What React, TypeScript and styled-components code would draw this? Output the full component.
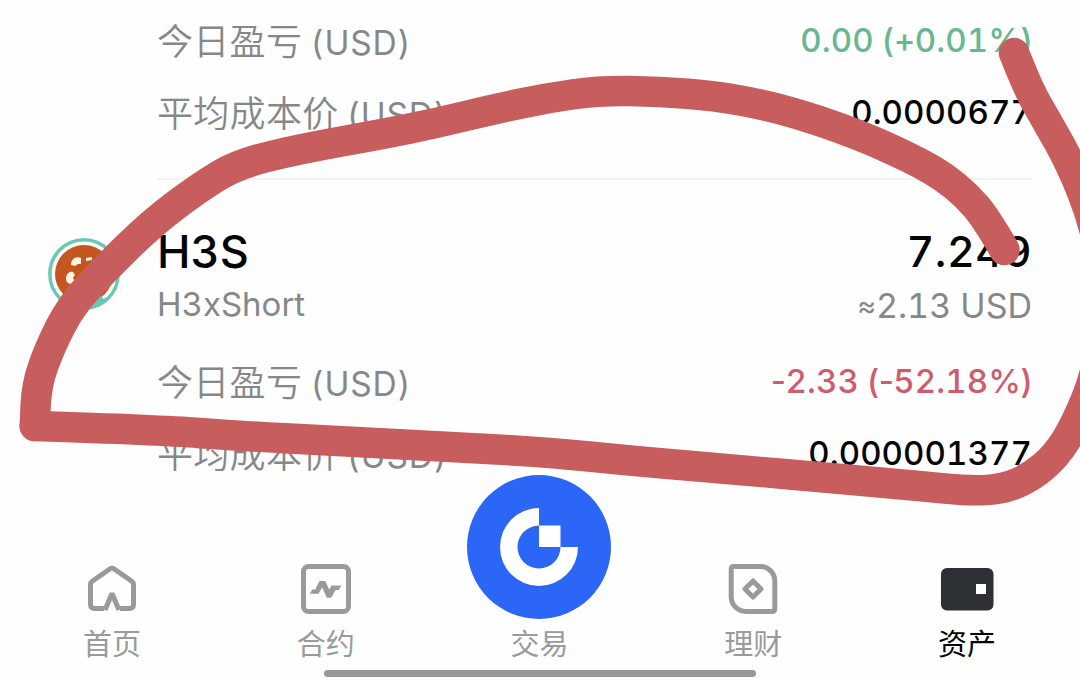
import React from "react";
import styled, { createGlobalStyle } from "styled-components";

type Tone = "up" | "down" | "plain";
type Point = [number, number];

interface StatProps {
  label: string;
  value: string;
  tone: Tone;
}

interface TabProps {
  label: string;
  active?: boolean;
  children: React.ReactNode;
}

const tones = {
  up: "#67b891",
  down: "#cf5c6c",
  plain: "#050505",
};

// digits stay tabular, signs and brackets keep their natural width
const splitValue = (value: string) => value.split(/([0-9.]+)/).filter(Boolean);

const Stat = ({ label, value, tone }: StatProps) => (
  <S.Stat>
    <S.Label>
      {label} <S.Unit>(USD)</S.Unit>
    </S.Label>
    <S.Value $tone={tone}>
      {splitValue(value).map((part, i) =>
        /\d/.test(part) ? part : <S.Sign key={i}>{part}</S.Sign>
      )}
    </S.Value>
  </S.Stat>
);

const Tab = ({ label, active, children }: TabProps) => (
  <S.Tab $active={active}>
    <S.TabIcon>{children}</S.TabIcon>
    <S.TabLabel>{label}</S.TabLabel>
  </S.Tab>
);

const CoinIcon = () => (
  <svg width="72" height="72" viewBox="0 0 72 72">
    <circle cx="36" cy="36" r="34.2" fill="#fffdf5" stroke="#69c9b3" strokeWidth="3.4" />
    <circle cx="36" cy="36" r="29" fill="#c4561f" />
    <path
      d="M23 27C23 20 29 18 33 20L33 26L30 26L27 28ZM38 20L44 19L44 22L38 23ZM18 41C18 35 22 33 25 34L27 37L25 40L27 43L22 46C19 45 18 43 18 41Z"
      fill="#fff3df"
    />
    <path d="M52 54L55 61L63 58C57 66 48 71 38 71L39 68Z" fill="#62c9b8" />
  </svg>
);

const HomeIcon = () => (
  <svg width="54" height="54" viewBox="0 0 54 54" fill="none" stroke="currentColor" strokeWidth="5">
    <path d="M19 46.6H9.5Q5.5 46.6 5.5 42.6V22.5Q5.5 20.5 7.2 19.2L24.8 7Q27 5.4 29.2 7L46.8 19.2Q48.5 20.5 48.5 22.5V42.6Q48.5 46.6 44.5 46.6H35" />
    <path d="M20 48L27 31.5L34 48" strokeLinejoin="bevel" />
  </svg>
);

const FuturesIcon = () => (
  <svg width="54" height="54" viewBox="0 0 54 54" fill="none" stroke="currentColor">
    <rect x="4.5" y="4.5" width="45" height="45" rx="5" strokeWidth="5" />
    <path
      d="M13.4 27.5H16.2L20.5 19H26.2L30.2 27.6L32.6 23.6H42.5L39.6 28H36.6L32.2 35.8H27.8L23.2 25.4L19.5 31.8H10.8Z"
      fill="currentColor"
      stroke="none"
    />
  </svg>
);

const TradeIcon = () => (
  <svg width="78" height="78" viewBox="0 0 78 78">
    <path d="M39 0A39 39 0 1 0 78 39H60.5A21.5 21.5 0 1 1 39 17.5Z" fill="#fff" />
    <rect x="39" y="17.5" width="21.5" height="21.5" fill="#fff" />
  </svg>
);

const EarnIcon = () => (
  <svg width="54" height="54" viewBox="0 0 54 54" fill="none" stroke="currentColor">
    <path
      d="M7.5 4.5H34A14.5 14.5 0 0 1 48.8 19V46.5Q48.8 49.5 45.8 49.5H20A14.7 14.7 0 0 1 5.2 35V7.5Q5.2 4.5 7.5 4.5Z"
      strokeWidth="5"
    />
    <path d="M27 19L35 27L27 35L19 27Z" strokeWidth="5" strokeLinejoin="round" />
  </svg>
);

const AssetsIcon = () => (
  <svg width="54" height="54" viewBox="0 0 54 54">
    <rect x="1" y="6" width="52.5" height="42.5" rx="6" fill="#2d3034" />
    <rect x="36" y="22" width="10" height="10" fill="#fff" />
  </svg>
);

const upperStroke: Point[] = [
  [1004.5, 250],
  [986, 218],
  [966, 195],
  [944, 177],
  [920, 163],
  [895, 151],
  [873, 141],
  [840, 128],
  [800, 114.5],
  [760, 104],
  [715, 96],
  [660, 91.5],
  [600, 90.5],
  [547, 98],
  [490, 110],
  [435, 123.5],
  [380, 134.6],
  [300, 149],
  [238, 164],
  [200, 187],
  [152, 223],
  [103, 271],
  [71, 306],
  [50, 347],
  [36.5, 385],
  [34.8, 426],
];

const lowerStroke: Point[] = [
  [34.8, 426],
  [160, 430],
  [240, 436],
  [330, 440.5],
  [440, 446.5],
  [545, 452],
  [633, 461],
  [740, 470],
  [840, 479],
  [920, 486],
  [970, 491],
  [1004, 489],
  [1031, 477],
  [1056, 456],
  [1076, 424],
  [1097, 372],
  [1108, 295],
  [1094, 222],
  [1070.5, 163],
  [1045, 118],
  [1030, 92],
  [1014, 53],
];

// quadratic curves that run from midpoint to midpoint
const smooth = (points: Point[]) => {
  const last = points[points.length - 1];
  const curves = points.slice(1, -1).map((p, i) => {
    const next = points[i + 2];
    return `Q${p} ${(p[0] + next[0]) / 2},${(p[1] + next[1]) / 2}`;
  });
  return `M${points[0]}${curves.join("")}L${last}`;
};

// freehand marker drawn over the asset list
const Marker = () => (
  <S.Marker viewBox="0 0 1080 680">
    <path d={smooth(upperStroke)} />
    <path d={smooth(lowerStroke)} />
  </S.Marker>
);

const App = () => (
  <>
    <GlobalStyle />
    <S.Screen>
      <S.Assets>
        <Stat label="今日盈亏" value="0.00 (+0.01%)" tone="up" />
        <Stat label="平均成本价" value="0.0000677" tone="plain" />
        <S.Divider />
        <S.Coin>
          <S.CoinLogo>
            <CoinIcon />
          </S.CoinLogo>
          <S.CoinText>
            <S.Symbol>H3S</S.Symbol>
            <S.CoinName>H3xShort</S.CoinName>
          </S.CoinText>
          <S.Holding>
            <S.Amount>7.249</S.Amount>
            <S.Worth>
              <S.Approx>≈</S.Approx>2.13 USD
            </S.Worth>
          </S.Holding>
        </S.Coin>
        <Stat label="今日盈亏" value="-2.33 (-52.18%)" tone="down" />
        <Stat label="平均成本价" value="0.000001377" tone="plain" />
      </S.Assets>
      <Marker />
      <S.TabBar>
        <Tab label="首页">
          <HomeIcon />
        </Tab>
        <Tab label="合约">
          <FuturesIcon />
        </Tab>
        <Tab label="交易">
          <S.TradeButton>
            <TradeIcon />
          </S.TradeButton>
        </Tab>
        <Tab label="理财">
          <EarnIcon />
        </Tab>
        <Tab label="资产" active>
          <AssetsIcon />
        </Tab>
      </S.TabBar>
      <S.HomeIndicator />
    </S.Screen>
  </>
);

export default App;

const GlobalStyle = createGlobalStyle`
  body {
    margin: 0;
    background: #fefefe;
    font-family: Inter, "Noto Sans CJK SC", sans-serif;
    font-variant-numeric: tabular-nums;
  }
`;

const S = {
  Screen: styled.div`
    position: relative;
    display: flex;
    flex-direction: column;
    width: 1080px;
    height: 680px;
    overflow: hidden;
    background: #fefefe;
  `,
  Assets: styled.main`
    display: flex;
    flex-direction: column;
    height: 537px;
    box-sizing: border-box;
    padding: 5px 48px 0;
  `,
  Stat: styled.div`
    display: flex;
    align-items: flex-start;
    justify-content: space-between;
    flex: none;
    height: 72px;
    padding-left: 109px;
    white-space: nowrap;
  `,
  Label: styled.span`
    color: #858888;
    font-family: "Noto Sans CJK SC", sans-serif;
    font-size: 36px;
    font-weight: 350;
    line-height: 68px;
    letter-spacing: 0.3px;
  `,
  Unit: styled.span`
    font-family: Inter, sans-serif;
    font-size: 33.5px;
    font-weight: 400;
    letter-spacing: 0.8px;
  `,
  Value: styled.span<{ $tone: Tone }>`
    color: ${({ $tone }) => tones[$tone]};
    font-size: 33px;
    font-weight: 500;
    line-height: 70px;
    letter-spacing: 0.1px;
    white-space: pre;
  `,
  Sign: styled.span`
    font-variant-numeric: normal;
    letter-spacing: -0.6px;
  `,
  Divider: styled.hr`
    flex: none;
    width: 875px;
    height: 2px;
    margin: 29px 0 0 109px;
    border: 0;
    background: #f2f3f3;
  `,
  Coin: styled.section`
    display: flex;
    flex: none;
    height: 166px;
    padding-top: 44px;
    box-sizing: border-box;
  `,
  CoinLogo: styled.div`
    width: 109px;
    padding-top: 14px;
  `,
  CoinText: styled.div`
    display: flex;
    flex-direction: column;
    flex: 1;
  `,
  Symbol: styled.span`
    color: #050505;
    font-size: 45px;
    font-weight: 500;
    line-height: 56px;
  `,
  CoinName: styled.span`
    color: #858888;
    font-size: 33px;
    line-height: 48px;
  `,
  Holding: styled.div`
    display: flex;
    flex-direction: column;
    align-items: flex-end;
  `,
  Amount: styled.span`
    color: #050505;
    font-size: 43px;
    font-weight: 500;
    line-height: 55px;
    letter-spacing: 0.5px;
  `,
  Worth: styled.span`
    color: #858888;
    font-size: 34px;
    line-height: 54px;
  `,
  Approx: styled.span`
    font-size: 29px;
    line-height: 1;
    vertical-align: 2px;
  `,
  Marker: styled.svg`
    position: absolute;
    inset: 0;
    width: 1080px;
    height: 680px;
    fill: none;
    stroke: #c75d5d;
    stroke-width: 30.5px;
    stroke-linecap: round;
    stroke-linejoin: round;
    pointer-events: none;
  `,
  TabBar: styled.nav`
    display: flex;
    justify-content: space-between;
    flex: none;
    height: 133px;
    padding: 0 6px 0 5px;
  `,
  Tab: styled.div<{ $active?: boolean }>`
    display: flex;
    flex-direction: column;
    align-items: center;
    flex: 1;
    color: ${({ $active }) => ($active ? "#050505" : "#999b9b")};
  `,
  TabIcon: styled.div`
    display: flex;
    justify-content: center;
    align-items: flex-start;
    height: 83px;
    padding-top: 25px;
    box-sizing: border-box;
  `,
  TabLabel: styled.span`
    font-family: "Noto Sans CJK SC", sans-serif;
    font-size: 29px;
    line-height: 44px;
  `,
  TradeButton: styled.div`
    position: relative;
    display: flex;
    align-items: center;
    justify-content: center;
    flex: none;
    width: 144px;
    height: 144px;
    margin-top: -87px;
    border-radius: 50%;
    background: #2b66f6;
  `,
  HomeIndicator: styled.div`
    width: 432px;
    height: 7px;
    margin: 0 auto;
    border-radius: 4px;
    background: #999;
  `,
};
